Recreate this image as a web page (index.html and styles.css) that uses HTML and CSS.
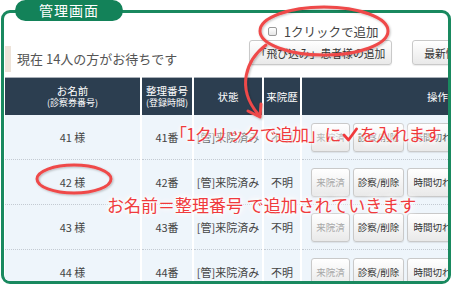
FILE: index.html
```html
<!DOCTYPE html>
<html lang="ja">
<head>
<meta charset="utf-8">
<title>管理画面</title>
<link rel="stylesheet" href="styles.css">
</head>
<body>
<div class="tab">管理画面</div>
<div class="frame">
  <div class="top">
    <div class="waiting">現在 14人の方がお待ちです</div>
    <div class="controls">
      <div class="oneclick"><span class="cb"></span>1クリックで追加</div>
      <div class="btns">
        <span class="btn btn-walkin">「飛び込み」患者様の追加</span>
        <span class="btn btn-refresh">最新情報に更新</span>
      </div>
    </div>
  </div>
  <div class="table">
    <div class="th"><span>お名前</span><small>(診察券番号)</small></div>
    <div class="th"><span>整理番号</span><small>(登録時間)</small></div>
    <div class="th"><span>状態</span></div>
    <div class="th"><span>来院歴</span></div>
    <div class="th th-ops"><span>操作ボタン</span></div>

    <div class="td">41 様</div>
    <div class="td">41番</div>
    <div class="td">[管]来院済み</div>
    <div class="td">不明</div>
    <div class="td ops"><span class="btn sm off">来院済</span><span class="btn sm">診察/削除</span><span class="btn sm">時間切れ</span></div>

    <div class="td">42 様</div>
    <div class="td">42番</div>
    <div class="td">[管]来院済み</div>
    <div class="td">不明</div>
    <div class="td ops"><span class="btn sm off">来院済</span><span class="btn sm">診察/削除</span><span class="btn sm">時間切れ</span></div>

    <div class="td">43 様</div>
    <div class="td">43番</div>
    <div class="td">[管]来院済み</div>
    <div class="td">不明</div>
    <div class="td ops"><span class="btn sm off">来院済</span><span class="btn sm">診察/削除</span><span class="btn sm">時間切れ</span></div>

    <div class="td">44 様</div>
    <div class="td">44番</div>
    <div class="td">[管]来院済み</div>
    <div class="td">不明</div>
    <div class="td ops"><span class="btn sm off">来院済</span><span class="btn sm">診察/削除</span><span class="btn sm">時間切れ</span></div>
  </div>
</div>

<svg class="marks" width="454" height="287" viewBox="0 0 454 287" aria-hidden="true">
  <defs>
    <filter id="sh" x="-20%" y="-20%" width="140%" height="140%">
      <feDropShadow dx="1" dy="1" stdDeviation="1" flood-color="#000" flood-opacity="0.25"/>
    </filter>
  </defs>
  <g fill="none" stroke="#ef4a4a" stroke-width="3" stroke-linecap="round" stroke-linejoin="round" filter="url(#sh)">
    <ellipse cx="324" cy="31" rx="64" ry="24"/>
    <path d="M266 45 C246 60 236 88 258 114"/>
    <path d="M248 111 L260 117 L261 104"/>
    <ellipse cx="74" cy="179" rx="37" ry="14"/>
  </g>
</svg>
<div class="note note1">「1クリックで追加」に<svg class="chk" width="16" height="15" viewBox="0 0 16 15" aria-hidden="true"><path d="M2 8 L6.5 13 L14.5 2" fill="none" stroke="#f03a3c" stroke-width="2.8" stroke-linecap="round" stroke-linejoin="round"/></svg>を入れます</div>
<div class="note note2">お名前＝整理番号 で追加されていきます</div>
</body>
</html>
```

FILE: styles.css
```css
* { box-sizing: border-box; }
html, body { margin: 0; padding: 0; }
body {
  position: relative;
  width: 454px;
  height: 287px;
  overflow: hidden;
  background: #fff;
  font-family: "Noto Sans CJK JP", "Noto Sans", sans-serif;
  color: #444;
}

.tab {
  position: absolute;
  left: 15px;
  top: 0;
  width: 108px;
  height: 21px;
  border-radius: 11px;
  background: #138259;
  color: #fff;
  font-size: 14px;
  line-height: 21px;
  letter-spacing: 1px;
  text-align: center;
  z-index: 2;
}

.frame {
  margin: 10px 3px 3px 1px;
  height: 274px;
  border: 3px solid #19895f;
  border-radius: 9px;
  overflow: hidden;
  background: #fff;
}

.top {
  display: flex;
  height: 64px;
}
.waiting {
  flex: 0 0 244px;
  margin: 33px 0 0 1px;
  height: 26px;
  border-left: 6px solid #ede3d9;
  padding-left: 6px;
  font-size: 13px;
  line-height: 26px;
  color: #555;
  white-space: nowrap;
}
.controls {
  display: flex;
  flex-direction: column;
  white-space: nowrap;
}
.oneclick {
  display: flex;
  align-items: center;
  margin-top: 11px;
  padding-left: 19px;
  height: 14px;
  font-size: 12.5px;
  color: #444;
}
.cb {
  width: 9px;
  height: 9px;
  margin-right: 7px;
  border: 1px solid #9a9a9a;
  border-radius: 2px;
  background: linear-gradient(#fff, #e6e6e6);
}
.btns {
  display: flex;
  gap: 20px;
  margin-top: 2px;
}
.btn {
  display: inline-flex;
  align-items: center;
  justify-content: center;
  border: 1px solid #c9c9c9;
  border-radius: 3px;
  background: linear-gradient(#ffffff, #e9e9e9);
  box-shadow: 0 1px 1px rgba(0,0,0,0.08);
  color: #333;
  white-space: nowrap;
}
.btn-walkin { width: 143px; height: 25px; font-size: 10.8px; }
.btn-refresh { width: 100px; height: 25px; font-size: 10.8px; }

.table {
  display: grid;
  grid-template-columns: 135px 50px 68px 36px 200px;
  column-gap: 2px;
  margin-left: 1px;
}
.th {
  height: 38px;
  border-top: 1px solid #a9b0b8;
  background: #2c3e50;
  color: #fff;
  display: flex;
  flex-direction: column;
  align-items: center;
  justify-content: center;
  font-size: 10.5px;
  line-height: 11px;
  white-space: nowrap;
}
.th small { font-size: 9px; line-height: 11px; margin-top: 1px; }
.th-ops { align-items: flex-start; padding-left: 125px; }

.td {
  height: 45px;
  border-bottom: 1px dotted #c3cad2;
  background: #eef5fb;
  display: flex;
  align-items: center;
  justify-content: center;
  font-size: 11px;
  color: #444;
  white-space: nowrap;
}
.td.ops {
  justify-content: flex-start;
  gap: 3px;
  padding-left: 9px;
}
.btn.sm { height: 29px; font-size: 9.5px; padding: 0 5px; }
.btn.sm:nth-child(1) { width: 39px; }
.btn.sm:nth-child(2) { width: 51px; }
.btn.sm:nth-child(3) { width: 51px; }
.btn.off { color: #a8a8a8; }

.marks {
  position: absolute;
  left: 0;
  top: 0;
  z-index: 3;
}
.note {
  position: absolute;
  z-index: 4;
  font-size: 17px;
  line-height: 20px;
  color: #f03a3c;
  white-space: nowrap;
  text-shadow: 0 0 3px #fff, 0 0 5px #fff, 0 0 8px #fff, 0 0 12px #fff, 0 0 16px #fff;
}
.note1 { left: 170px; top: 124px; letter-spacing: -0.8px; }
.note2 { left: 107px; top: 195px; }
.chk {
  display: inline-block;
  vertical-align: -1px;
  margin: 0 2px 0 1px;
  filter: drop-shadow(0 0 2px #fff);
}
```
